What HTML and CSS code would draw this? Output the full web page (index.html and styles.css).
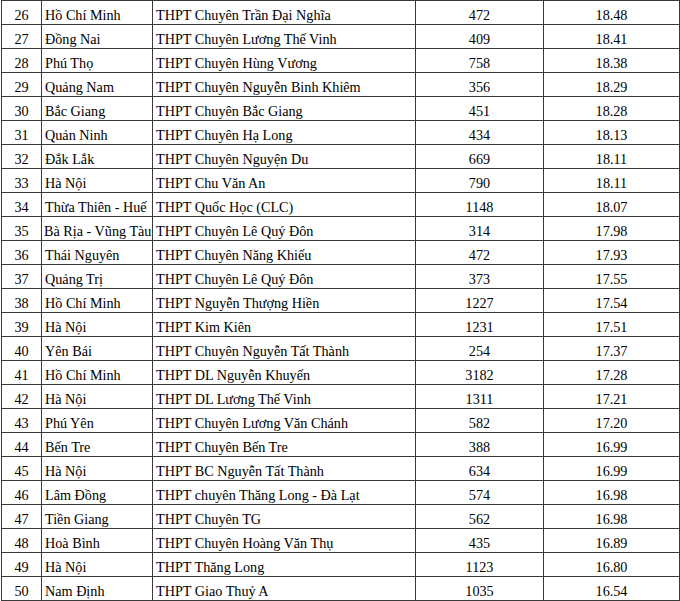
FILE: index.html
```html
<!DOCTYPE html>
<html lang="vi">
<head>
<meta charset="utf-8">
<title>Xếp hạng trường THPT</title>
<link rel="stylesheet" href="styles.css">
</head>
<body>
<table class="rank-table">
<colgroup>
<col class="c-rank"><col class="c-prov"><col class="c-school"><col class="c-count"><col class="c-score">
</colgroup>
<tbody>
<tr><td class="num">26</td><td>Hồ Chí Minh</td><td>THPT Chuyên Trần Đại Nghĩa</td><td class="num">472</td><td class="num">18.48</td></tr>
<tr><td class="num">27</td><td>Đồng Nai</td><td>THPT Chuyên Lương Thế Vinh</td><td class="num">409</td><td class="num">18.41</td></tr>
<tr><td class="num">28</td><td>Phú Thọ</td><td>THPT Chuyên Hùng Vương</td><td class="num">758</td><td class="num">18.38</td></tr>
<tr><td class="num">29</td><td>Quảng Nam</td><td>THPT Chuyên Nguyễn Binh Khiêm</td><td class="num">356</td><td class="num">18.29</td></tr>
<tr><td class="num">30</td><td>Bắc Giang</td><td>THPT Chuyên Bắc Giang</td><td class="num">451</td><td class="num">18.28</td></tr>
<tr><td class="num">31</td><td>Quản Ninh</td><td>THPT Chuyên Hạ Long</td><td class="num">434</td><td class="num">18.13</td></tr>
<tr><td class="num">32</td><td>Đắk Lắk</td><td>THPT Chuyên Nguyện Du</td><td class="num">669</td><td class="num">18.11</td></tr>
<tr><td class="num">33</td><td>Hà Nội</td><td>THPT Chu Văn An</td><td class="num">790</td><td class="num">18.11</td></tr>
<tr><td class="num">34</td><td>Thừa Thiên - Huế</td><td>THPT Quốc Học (CLC)</td><td class="num">1148</td><td class="num">18.07</td></tr>
<tr><td class="num">35</td><td class="tight">Bà Rịa - Vũng Tàu</td><td>THPT Chuyên Lê Quý Đôn</td><td class="num">314</td><td class="num">17.98</td></tr>
<tr><td class="num">36</td><td>Thái Nguyên</td><td>THPT Chuyên Năng Khiếu</td><td class="num">472</td><td class="num">17.93</td></tr>
<tr><td class="num">37</td><td>Quảng Trị</td><td>THPT Chuyên Lê Quý Đôn</td><td class="num">373</td><td class="num">17.55</td></tr>
<tr><td class="num">38</td><td>Hồ Chí Minh</td><td>THPT Nguyễn Thượng Hiền</td><td class="num">1227</td><td class="num">17.54</td></tr>
<tr><td class="num">39</td><td>Hà Nội</td><td>THPT Kim Kiên</td><td class="num">1231</td><td class="num">17.51</td></tr>
<tr><td class="num">40</td><td>Yên Bái</td><td>THPT Chuyên Nguyễn Tất Thành</td><td class="num">254</td><td class="num">17.37</td></tr>
<tr><td class="num">41</td><td>Hồ Chí Minh</td><td>THPT DL Nguyễn Khuyến</td><td class="num">3182</td><td class="num">17.28</td></tr>
<tr><td class="num">42</td><td>Hà Nội</td><td>THPT DL Lương Thế Vinh</td><td class="num">1311</td><td class="num">17.21</td></tr>
<tr><td class="num">43</td><td>Phú Yên</td><td>THPT Chuyên Lương Văn Chánh</td><td class="num">582</td><td class="num">17.20</td></tr>
<tr><td class="num">44</td><td>Bến Tre</td><td>THPT Chuyên Bến Tre</td><td class="num">388</td><td class="num">16.99</td></tr>
<tr><td class="num">45</td><td>Hà Nội</td><td>THPT BC Nguyễn Tất Thành</td><td class="num">634</td><td class="num">16.99</td></tr>
<tr><td class="num">46</td><td>Lâm Đồng</td><td>THPT chuyên Thăng Long - Đà Lạt</td><td class="num">574</td><td class="num">16.98</td></tr>
<tr><td class="num">47</td><td>Tiền Giang</td><td>THPT Chuyên TG</td><td class="num">562</td><td class="num">16.98</td></tr>
<tr><td class="num">48</td><td>Hoà Bình</td><td>THPT Chuyên Hoàng Văn Thụ</td><td class="num">435</td><td class="num">16.89</td></tr>
<tr><td class="num">49</td><td>Hà Nội</td><td>THPT Thăng Long</td><td class="num">1123</td><td class="num">16.80</td></tr>
<tr><td class="num">50</td><td>Nam Định</td><td>THPT Giao Thuỷ A</td><td class="num">1035</td><td class="num">16.54</td></tr>
</tbody>
</table>
</body>
</html>
```

FILE: styles.css
```css
html, body {
  margin: 0;
  padding: 0;
  background: #ffffff;
}

body {
  padding-left: 1px;
  font-family: "Liberation Serif", "Times New Roman", serif;
  font-size: 14.2px;
  color: #000000;
}

.rank-table {
  border-collapse: collapse;
  table-layout: fixed;
  width: 678px;
}

.c-rank { width: 40px; }
.c-prov { width: 111px; }
.c-school { width: 263px; }
.c-count { width: 128px; }
.c-score { width: 136px; }

.rank-table td {
  border: 1px solid #3a3a3a;
  height: 24px;
  padding: 0 2px 1px 3px;
  box-sizing: border-box;
  line-height: 16px;
  vertical-align: bottom;
  white-space: nowrap;
  overflow: visible;
}

.rank-table td.num {
  text-align: center;
  padding-left: 0;
  padding-right: 0;
}

.rank-table td.tight {
  padding-left: 2px;
  padding-right: 0;
}
```
